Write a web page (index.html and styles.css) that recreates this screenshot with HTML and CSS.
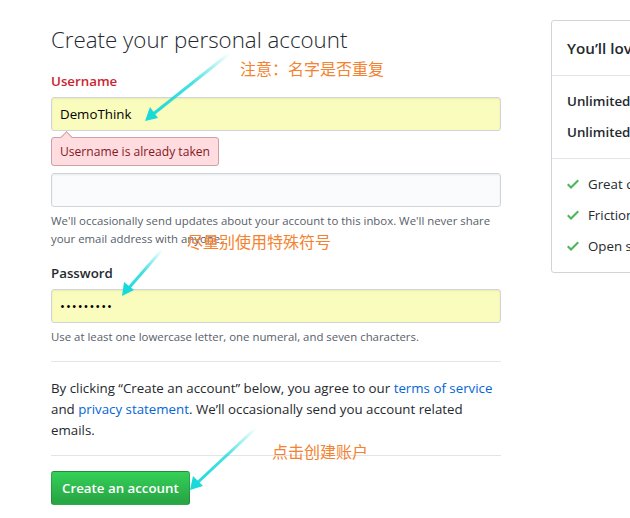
FILE: index.html
```html
<!DOCTYPE html>
<html lang="en">
<head>
<meta charset="utf-8">
<link rel="stylesheet" href="styles.css">
</head>
<body>
<div class="page">
  <main class="signup">
    <h1 class="title">Create your personal account</h1>
    <div class="field field-first">
      <label class="label label-error">Username</label>
      <div class="input input-autofill">DemoThink</div>
      <div class="error-tip">Username is already taken</div>
    </div>
    <div class="field">
      <label class="label">Email address</label>
      <div class="input"></div>
      <p class="note">We'll occasionally send updates about your account to this inbox. We'll never share your email address with anyone.</p>
    </div>
    <div class="field">
      <label class="label">Password</label>
      <div class="input input-autofill dots">•••••••••</div>
      <p class="note">Use at least one lowercase letter, one numeral, and seven characters.</p>
    </div>
    <hr class="rule rule-top">
    <p class="terms">By clicking “Create an account” below, you agree to our <a href="#">terms of service</a> and <a href="#">privacy statement</a>. We’ll occasionally send you account related emails.</p>
    <hr class="rule rule-bottom">
    <button class="btn-primary">Create an account</button>
  </main>
  <aside class="sidebar">
    <h2 class="side-title">You’ll love GitHub</h2>
    <ul class="side-list side-strong">
      <li>Unlimited collaborators</li>
      <li>Unlimited public repositories</li>
    </ul>
    <ul class="side-list side-checks">
      <li><svg class="check" viewBox="0 0 12 16" width="12" height="16"><path d="M12 5l-8 8-4-4 1.5-1.5L4 10l6.5-6.5L12 5z"/></svg>Great communication</li>
      <li><svg class="check" viewBox="0 0 12 16" width="12" height="16"><path d="M12 5l-8 8-4-4 1.5-1.5L4 10l6.5-6.5L12 5z"/></svg>Frictionless development</li>
      <li><svg class="check" viewBox="0 0 12 16" width="12" height="16"><path d="M12 5l-8 8-4-4 1.5-1.5L4 10l6.5-6.5L12 5z"/></svg>Open source community</li>
    </ul>
  </aside>
</div>

<div class="annot annot-1">注意：名字是否重复</div>
<div class="annot annot-2">尽量别使用特殊符号</div>
<div class="annot annot-3">点击创建账户</div>

<svg class="arrows" width="630" height="518" viewBox="0 0 630 518">
  <defs>
    <linearGradient id="g1" gradientUnits="userSpaceOnUse" x1="230" y1="53" x2="145" y2="120">
      <stop offset="0" stop-color="#19d9d9" stop-opacity="0"/>
      <stop offset="0.45" stop-color="#19d9d9" stop-opacity="0.8"/>
      <stop offset="1" stop-color="#19d9d9"/>
    </linearGradient>
    <linearGradient id="g2" gradientUnits="userSpaceOnUse" x1="162" y1="250" x2="122" y2="296">
      <stop offset="0" stop-color="#19d9d9" stop-opacity="0"/>
      <stop offset="0.45" stop-color="#19d9d9" stop-opacity="0.8"/>
      <stop offset="1" stop-color="#19d9d9"/>
    </linearGradient>
    <linearGradient id="g3" gradientUnits="userSpaceOnUse" x1="256" y1="428" x2="190" y2="490">
      <stop offset="0" stop-color="#19d9d9" stop-opacity="0"/>
      <stop offset="0.45" stop-color="#19d9d9" stop-opacity="0.8"/>
      <stop offset="1" stop-color="#19d9d9"/>
    </linearGradient>
  </defs>
  <path d="M230 53 L152 115" stroke="url(#g1)" stroke-width="3" fill="none"/>
  <path d="M145 121 L150 107 L158 118 Z" fill="#19d9d9"/>
  <path d="M162 250 L127 290" stroke="url(#g2)" stroke-width="3" fill="none"/>
  <path d="M122 296 L124 282 L134 290 Z" fill="#19d9d9"/>
  <path d="M256 428 L196 484" stroke="url(#g3)" stroke-width="3" fill="none"/>
  <path d="M190 490 L193 476 L203 486 Z" fill="#19d9d9"/>
</svg>
</body>
</html>
```
FILE: styles.css
```css
html, body {
  margin: 0;
  padding: 0;
  overflow: hidden;
  background: #fff;
}
body {
  width: 630px;
  height: 518px;
  position: relative;
  font-family: "Open Sans", "Noto Sans", sans-serif;
  color: #24292e;
  font-size: 13.3px;
}
.page {
  display: flex;
  gap: 50px;
  padding: 20px 0 0 51px;
  width: 1000px;
}
.signup {
  width: 450px;
  flex: none;
}
.title {
  margin: 4px 0 15px;
  font-size: 22.3px;
  font-weight: 300;
  line-height: 32px;
  color: #24292e;
}
.field {
  position: relative;
  margin-bottom: 15px;
}
.field-first { margin-bottom: 16px; }
.label {
  display: block;
  font-weight: 600;
  font-size: 13.3px;
  line-height: 20px;
  margin-bottom: 6px;
}
.label-error { color: #cb2431; }
.input {
  box-sizing: border-box;
  height: 34px;
  border: 1px solid #d1d5da;
  border-radius: 3px;
  background: #fafbfc;
  box-shadow: inset 0 1px 2px rgba(27,31,35,0.075);
  padding: 0 8px;
  font-size: 13.3px;
  line-height: 32px;
  color: #000;
}
.input-autofill { background: #fafcbd; }
.dots { letter-spacing: 1px; font-size: 13px; }
.error-tip {
  position: absolute;
  left: 0;
  top: 66px;
  z-index: 2;
  padding: 5px 8px 4px;
  font-size: 12.1px;
  line-height: 18px;
  color: #86181d;
  background: #ffdce0;
  border: 1px solid #cea0a5;
  border-radius: 3px;
}
.error-tip::before {
  content: "";
  position: absolute;
  left: 10px;
  top: -5px;
  width: 8px;
  height: 8px;
  background: #ffdce0;
  border-left: 1px solid #cea0a5;
  border-top: 1px solid #cea0a5;
  transform: rotate(45deg);
}
.note {
  margin: 5px 0 0;
  font-size: 11.4px;
  line-height: 18px;
  color: #586069;
}
.rule {
  border: 0;
  border-top: 1px solid #e1e4e8;
  margin: 0;
}
.rule-top { margin: 11px 0 16px; }
.rule-bottom { margin: 14px 0 15px; }
.terms {
  margin: 0;
  font-size: 13.3px;
  line-height: 21px;
}
.terms a { color: #0366d6; text-decoration: none; }
.btn-primary {
  display: block;
  box-sizing: border-box;
  height: 34px;
  font-family: inherit;
  font-size: 13.3px;
  font-weight: 600;
  color: #fff;
  padding: 0 10px;
  line-height: 32px;
  border: 1px solid rgba(27,31,35,0.2);
  border-radius: 3px;
  background: linear-gradient(-180deg, #34d058 0%, #28a745 90%);
}
.sidebar {
  flex: none;
  width: 300px;
  align-self: flex-start;
  border: 1px solid #d1d5da;
  border-radius: 3px;
}
.side-title {
  margin: 0;
  padding: 16px 15px;
  font-size: 15.2px;
  font-weight: 600;
  line-height: 22px;
  border-bottom: 1px solid #e1e4e8;
}
.side-list {
  list-style: none;
  margin: 0;
  padding: 10px 15px;
}
.side-list li {
  line-height: 21px;
  padding: 5px 0;
  white-space: nowrap;
}
.side-strong { font-weight: 600; border-bottom: 1px solid #e1e4e8; }
.check {
  fill: #4fb558;
  vertical-align: -3px;
  margin-right: 9px;
}
.annot {
  position: absolute;
  font-family: "Noto Sans CJK SC", sans-serif;
  font-size: 16px;
  color: #f5822f;
  line-height: 20px;
  z-index: 5;
}
.annot-1 { left: 240px; top: 58px; }
.annot-2 { left: 187px; top: 231px; }
.annot-3 { left: 272px; top: 441px; }
.arrows {
  position: absolute;
  left: 0;
  top: 0;
  z-index: 6;
  pointer-events: none;
}
```
